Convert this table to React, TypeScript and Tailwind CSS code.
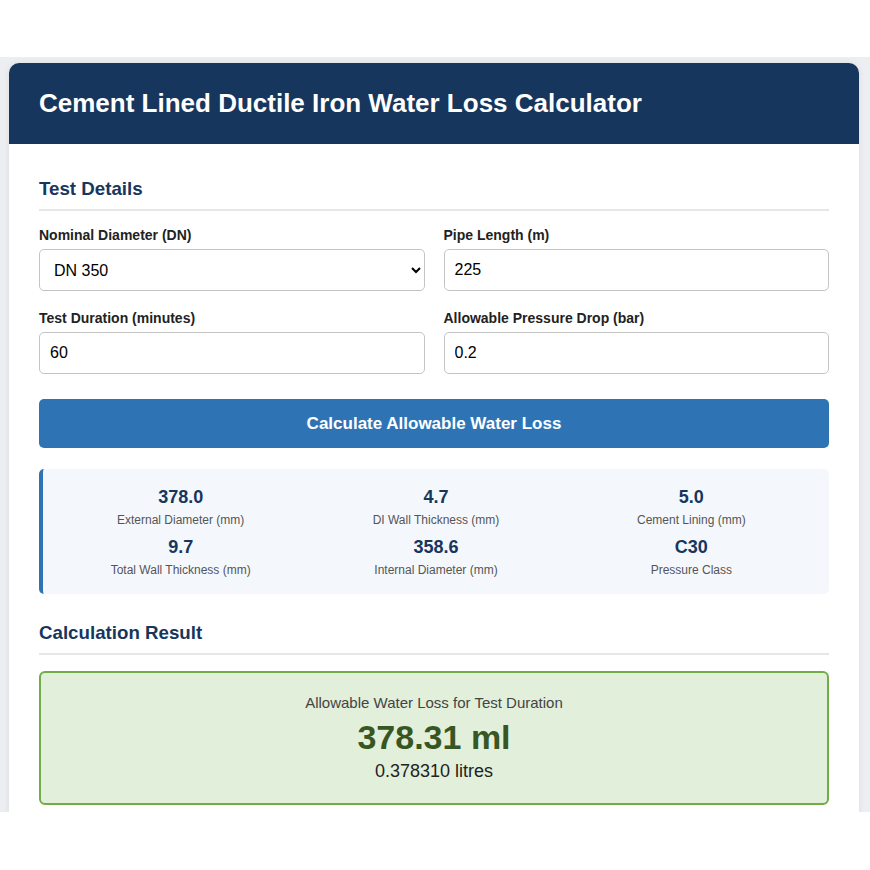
import React from 'react';

const specs = [
    { value: '378.0', label: 'External Diameter (mm)' },
    { value: '4.7', label: 'DI Wall Thickness (mm)' },
    { value: '5.0', label: 'Cement Lining (mm)' },
    { value: '9.7', label: 'Total Wall Thickness (mm)' },
    { value: '358.6', label: 'Internal Diameter (mm)' },
    { value: 'C30', label: 'Pressure Class' },
];

const App = () => {
    return (
        <div className="bg-white pt-[57px] font-['Liberation_Sans',Arial,sans-serif]">
            <div className="h-[755px] overflow-hidden bg-[#eceef2] pt-[6px] pl-[9px] pr-[11px]">
                <div className="bg-white rounded-t-[10px] shadow-[0_0_6px_rgba(0,0,0,0.08)]">
                    <div className="bg-[#17365d] rounded-t-[10px] px-[30px] py-[26px]">
                        <h1 className="text-white text-[26px] leading-[29px] font-bold">Cement Lined Ductile Iron Water Loss Calculator</h1>
                    </div>
                    <div className="px-[30px] pt-[34px] pb-[30px]">
                        <h2 className="text-[#17365d] text-[18.72px] leading-[22px] font-bold pb-[9px] border-b-2 border-[#e5e6e8]">Test Details</h2>

                        <div className="grid grid-cols-2 gap-x-[19px] mt-[16px]">
                            <div>
                                <label className="block text-[14px] leading-[17px] font-bold text-[#222] mb-[5px]">Nominal Diameter (DN)</label>
                                <select className="w-full h-[42px] px-[10px] text-[16px] text-black border border-[#c4c4c4] rounded-[5px] bg-white">
                                    <option>DN 350</option>
                                </select>
                            </div>
                            <div>
                                <label className="block text-[14px] leading-[17px] font-bold text-[#222] mb-[5px]">Pipe Length (m)</label>
                                <input type="text" defaultValue="225" className="w-full h-[42px] px-[10px] text-[16px] text-black border border-[#c4c4c4] rounded-[5px] focus:outline-none" />
                            </div>
                            <div className="mt-[19px]">
                                <label className="block text-[14px] leading-[17px] font-bold text-[#222] mb-[5px]">Test Duration (minutes)</label>
                                <input type="text" defaultValue="60" className="w-full h-[42px] px-[10px] text-[16px] text-black border border-[#c4c4c4] rounded-[5px] focus:outline-none" />
                            </div>
                            <div className="mt-[19px]">
                                <label className="block text-[14px] leading-[17px] font-bold text-[#222] mb-[5px]">Allowable Pressure Drop (bar)</label>
                                <input type="text" defaultValue="0.2" className="w-full h-[42px] px-[10px] text-[16px] text-black border border-[#c4c4c4] rounded-[5px] focus:outline-none" />
                            </div>
                        </div>

                        <button className="w-full h-[49px] mt-[25px] bg-[#2e74b5] text-white text-[17px] font-bold rounded-[5px]">Calculate Allowable Water Loss</button>

                        <div className="mt-[21px] bg-[#f4f8fd] border-l-4 border-[#2e74b5] rounded-[5px] px-[15px] pt-[17px] pb-[16px]">
                            <div className="grid grid-cols-3 gap-x-[10px] gap-y-[8px]">
                                {specs.map((s) => (
                                    <div key={s.label} className="text-center">
                                        <div className="text-[18px] leading-[22px] font-bold text-[#17365d] mb-[4px]">{s.value}</div>
                                        <div className="text-[12px] leading-[16px] text-[#555]">{s.label}</div>
                                    </div>
                                ))}
                            </div>
                        </div>

                        <h2 className="mt-[28px] text-[#17365d] text-[18.72px] leading-[22px] font-bold pb-[9px] border-b-2 border-[#e5e6e8]">Calculation Result</h2>

                        <div className="mt-[16px] bg-[#e2efda] border-2 border-[#70ad47] rounded-[6px] text-center pt-[21px] pb-[21px]">
                            <div className="text-[15px] leading-[18px] text-[#444]">Allowable Water Loss for Test Duration</div>
                            <div className="mt-[5px] text-[34px] leading-[40px] font-bold text-[#375623]">378.31 ml</div>
                            <div className="mt-[3px] text-[18px] leading-[22px] text-[#222]">0.378310 litres</div>
                        </div>
                    </div>
                </div>
            </div>
        </div>
    );
};

export default App;
